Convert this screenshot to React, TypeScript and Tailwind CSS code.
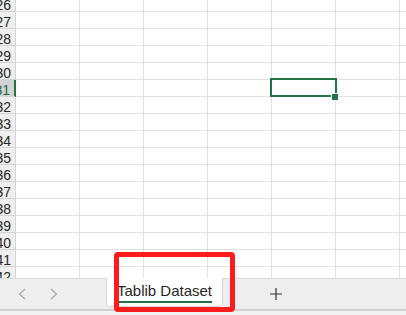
import React from 'react'

const rows = Array.from({ length: 17 }, (_, i) => 26 + i)
const cols = [0, 1, 2, 3, 4, 5, 6]

const App: React.FC = () => {
  return (
    <div className="relative w-[406px] h-[315px] overflow-hidden bg-white font-['Liberation_Sans',Arial,sans-serif] flex flex-col">
      {/* Grid */}
      <div className="h-[278px] overflow-hidden">
        <div className="-mt-[5px]">
          {rows.map(r => {
            const sel = r === 31
            return (
              <div key={r} className="flex h-[17px]">
                <div
                  className={`w-[16px] shrink-0 h-[17px] border-b border-[#d4d4d4] flex justify-end pr-[4px] pt-[2px] text-[14px] leading-[16px] overflow-visible whitespace-nowrap ${
                    sel ? 'bg-[#d2d2d2] text-[#1f6b40] border-r-2 border-r-[#217346]' : 'bg-[#efefef] text-[#262626] border-r border-r-[#d4d4d4]'
                  }`}
                >
                  {r}
                </div>
                {cols.map(c => (
                  <div key={c} className="relative w-[64px] shrink-0 h-[17px] border-b border-r border-[#e1e1e1]">
                    {sel && c === 4 && (
                      <>
                        <div className="absolute z-10 -left-[2px] -top-[2px] w-[67px] h-[19px] border-2 border-[#217346]" />
                        <div className="absolute z-10 left-[59px] top-[13px] w-[8px] h-[8px] bg-white" />
                        <div className="absolute z-10 left-[60px] top-[14px] w-[6px] h-[6px] bg-[#217346]" />
                      </>
                    )}
                  </div>
                ))}
              </div>
            )
          })}
        </div>
      </div>

      {/* Sheet tabs */}
      <div className="h-[33px] shrink-0 bg-[#eeeeee] border-t border-[#d9d9d9] border-b-2 border-b-[#d0d0d0] flex items-start">
        <div className="w-[106px] h-[30px] flex items-center">
          <svg width="8" height="12" viewBox="0 0 8 12" className="ml-[18px]">
            <path d="M7 1 L1.5 6 L7 11" fill="none" stroke="#a6a6a6" strokeWidth="1.2" />
          </svg>
          <svg width="8" height="12" viewBox="0 0 8 12" className="ml-[24px]">
            <path d="M1 1 L6.5 6 L1 11" fill="none" stroke="#a6a6a6" strokeWidth="1.2" />
          </svg>
        </div>
        <div className="-mt-px w-[117px] h-[29px] bg-white border-x border-b border-[#d6d6d6] rounded-b-[5px] flex flex-col items-center pt-[4px]">
          <span className="text-[15px] leading-[18px] text-[#262626] whitespace-nowrap">Tablib Dataset</span>
          <div className="mt-[1px] w-[95px] h-[2px] bg-[#217346]" />
        </div>
        <div className="h-[30px] flex items-center pl-[47px]">
          <svg width="12" height="12" viewBox="0 0 12 12">
            <path d="M6 0 V12 M0 6 H12" fill="none" stroke="#333333" strokeWidth="1.2" />
          </svg>
        </div>
      </div>
      <div className="flex-1 bg-[#f3f3f3]" />

      {/* Red annotation box */}
      <div className="absolute left-[114px] top-[252px] w-[121px] h-[60px] border-[5px] border-[#fe1c1c] rounded-[4px]" />
    </div>
  )
}

export default App
